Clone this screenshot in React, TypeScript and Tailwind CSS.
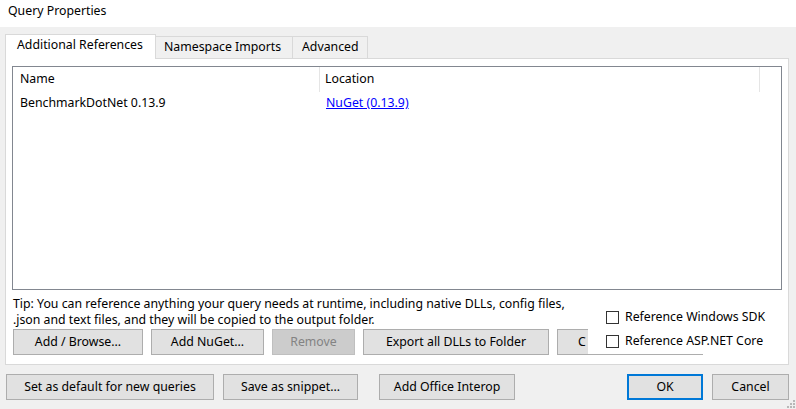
import React from 'react';

const font = { fontFamily: '"Noto Sans", "Open Sans", sans-serif' };

interface BtnProps {
    label: string;
    className?: string;
    disabled?: boolean;
    primary?: boolean;
}

const Btn: React.FC<BtnProps> = ({ label, className, disabled, primary }) => {
    let look = 'bg-[#e1e1e1] border border-[#adadad] text-black';
    if (disabled) look = 'bg-[#cccccc] border border-[#bfbfbf] text-[#838383]';
    if (primary) look = 'bg-[#e1e1e1] border-2 border-[#0078d7] text-black';
    return (
        <button className={`h-[26px] flex items-center justify-center text-[12.3px] leading-none whitespace-nowrap overflow-hidden ${look} ${className ?? ''}`}>
            {label}
        </button>
    );
};

const Check: React.FC<{ label: string }> = ({ label }) => (
    <div className="flex items-center h-[23px] gap-[6px]">
        <div className="w-[13px] h-[13px] border border-[#333333] bg-white" />
        <span className="text-[12.3px] text-black whitespace-nowrap">{label}</span>
    </div>
);

export default function App() {
    return (
        <div className="w-[796px] h-[409px] bg-[#f0f0f0] flex flex-col relative overflow-hidden text-[12.3px]" style={font}>
            {/* title */}
            <div className="h-[27px] bg-white flex items-center px-[8px] pb-[5px] text-black">
                Query Properties
            </div>

            {/* tabs */}
            <div className="flex items-end pl-[5px] pt-[6px] h-[31px]">
                <div className="h-[25px] w-[151px] bg-white border border-b-0 border-[#d9d9d9] flex items-center pl-[11px] pb-[3px] text-black relative top-[1px] z-10">
                    Additional References
                </div>
                <div className="h-[22px] w-[137px] bg-[#f0f0f0] border border-b-0 border-l-0 border-[#d9d9d9] flex items-center pl-[8px] pb-[1px] text-black">
                    Namespace Imports
                </div>
                <div className="h-[22px] w-[75px] bg-[#f0f0f0] border border-b-0 border-l-0 border-[#d9d9d9] flex items-center pl-[9px] pb-[1px] text-black">
                    Advanced
                </div>
            </div>

            {/* tab panel */}
            <div className="ml-[5px] w-[784px] h-[307px] bg-white border border-[#d9d9d9] px-[6px] pt-[7px] flex flex-col relative">
                <div className="h-[224px] border border-[#828790] bg-white flex flex-col">
                    <div className="h-[25px] flex items-stretch text-black">
                        <div className="w-[307px] flex items-center pl-[7px] border-r border-[#e5e5e5]">Name</div>
                        <div className="w-[440px] flex items-center pl-[5px] border-r border-[#e5e5e5]">Location</div>
                    </div>
                    <div className="h-[22px] flex items-center text-black">
                        <div className="w-[308px] pl-[7px]">BenchmarkDotNet 0.13.9</div>
                        <div className="pl-[5px] text-[#0000ff] underline">NuGet (0.13.9)</div>
                    </div>
                </div>

                <div className="mt-[6px] pl-[1px] leading-[16px] text-black">
                    <div>Tip: You can reference anything your query needs at runtime, including native DLLs, config files,</div>
                    <div>.json and text files, and they will be copied to the output folder.</div>
                </div>

                <div className="mt-[1px] flex gap-[8px] pl-[1px]">
                    <Btn label="Add / Browse..." className="w-[130px]" />
                    <Btn label="Add NuGet..." className="w-[113px]" />
                    <Btn label="Remove" className="w-[83px]" disabled />
                    <Btn label="Export all DLLs to Folder" className="w-[186px]" />
                    <button className="h-[26px] w-[146px] bg-[#e1e1e1] border border-[#adadad] text-black flex items-center pl-[20px]">
                        C
                    </button>
                </div>

                {/* checkbox overlay */}
                <div className="absolute left-[582px] top-[247px] flex flex-col">
                    <div className="pl-[18px]">
                        <Check label="Reference Windows SDK" />
                    </div>
                    <div className="bg-white w-[115px] pl-[18px] h-[25px] flex items-center">
                        <Check label="Reference ASP.NET Core" />
                    </div>
                </div>
            </div>

            {/* footer buttons */}
            <div className="mt-[9px] flex px-[6px]">
                <Btn label="Set as default for new queries" className="w-[208px]" />
                <Btn label="Save as snippet..." className="w-[135px] ml-[9px]" />
                <Btn label="Add Office Interop" className="w-[136px] ml-[21px]" />
                <Btn label="OK" className="w-[76px] ml-[112px]" primary />
                <Btn label="Cancel" className="w-[77px] ml-[9px]" />
            </div>

            {/* resize grip */}
            <svg className="absolute right-[1px] bottom-[1px]" width="10" height="10" viewBox="0 0 10 10">
                <rect x="8" y="2" width="2" height="2" fill="#b8b8b8" />
                <rect x="5" y="5" width="2" height="2" fill="#b8b8b8" />
                <rect x="8" y="5" width="2" height="2" fill="#b8b8b8" />
                <rect x="2" y="8" width="2" height="2" fill="#b8b8b8" />
                <rect x="5" y="8" width="2" height="2" fill="#b8b8b8" />
                <rect x="8" y="8" width="2" height="2" fill="#b8b8b8" />
            </svg>
        </div>
    );
}
